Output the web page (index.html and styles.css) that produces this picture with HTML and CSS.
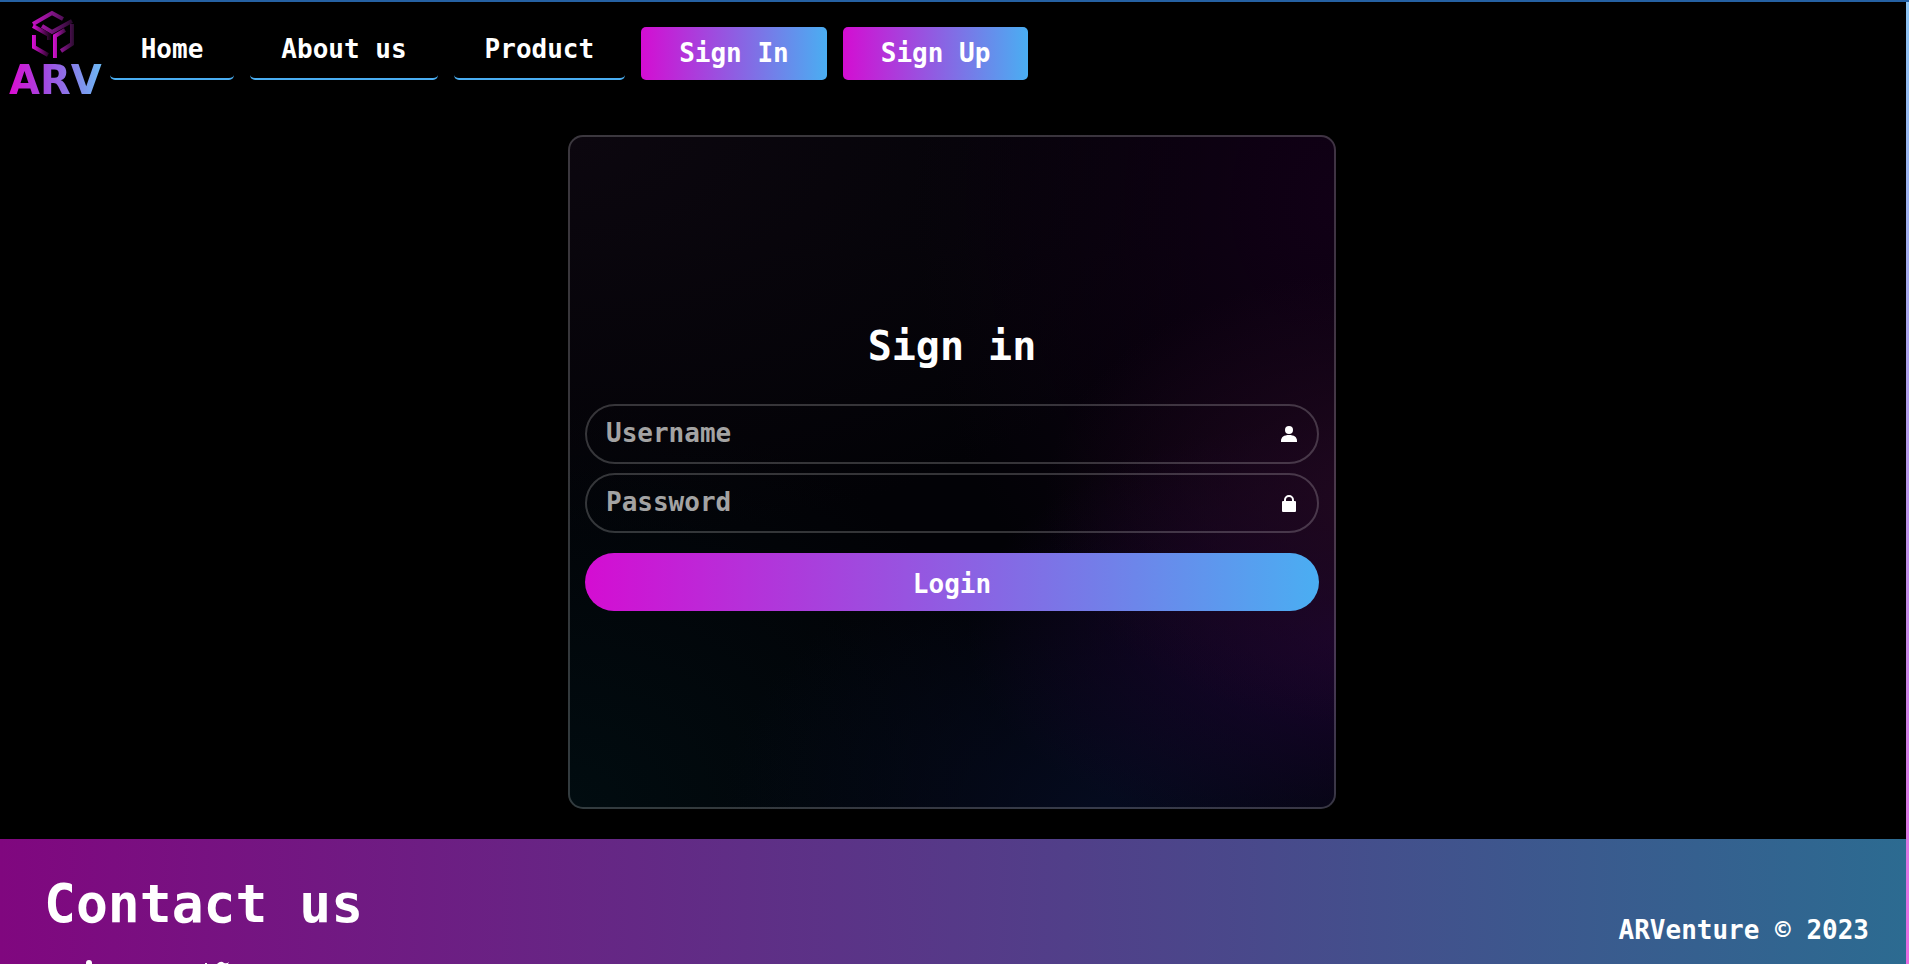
FILE: index.html
```html
<!DOCTYPE html>
<html lang="en">
<head>
<meta charset="utf-8">
<title>ARVenture - Sign in</title>
<link rel="stylesheet" href="styles.css">
</head>
<body>
<div class="page">
  <header class="navbar">
    <a class="logo" href="#">
      <svg class="logo-cube" viewBox="0 0 44 50" fill="none" stroke-width="4" aria-hidden="true">
        <defs>
          <linearGradient id="fade" gradientUnits="userSpaceOnUse" x1="0" y1="12" x2="44" y2="20">
            <stop offset="0" stop-color="#d010cc"/><stop offset=".5" stop-color="#7a1480"/><stop offset="1" stop-color="#1c0820"/>
          </linearGradient>
          <linearGradient id="side" gradientUnits="userSpaceOnUse" x1="2" y1="0" x2="20" y2="0">
            <stop offset="0" stop-color="#e010dc"/><stop offset="1" stop-color="#180418"/>
          </linearGradient>
          <linearGradient id="stem" gradientUnits="userSpaceOnUse" x1="23" y1="0" x2="36" y2="0">
            <stop offset="0" stop-color="#d812d4"/><stop offset="1" stop-color="#3a0c3e"/>
          </linearGradient>
          <linearGradient id="edge" gradientUnits="userSpaceOnUse" x1="31" y1="0" x2="44" y2="0">
            <stop offset="0" stop-color="#8a1490"/><stop offset="1" stop-color="#2a0c2e"/>
          </linearGradient>
        </defs>
        <path stroke="url(#fade)" d="M3 15 22 4 33 10M12 17 22 23 42 12"/>
        <path stroke="url(#side)" d="M3 17 19 26V31M4 26V38L18 46"/>
        <path stroke="url(#stem)" d="M25 49V27L35 21"/>
        <path stroke="url(#edge)" d="M42 15V35L31 42"/>
      </svg>
      <span class="logo-name">ARV</span>
    </a>
    <nav class="links">
      <a class="link" href="#">Home</a>
      <a class="link" href="#">About us</a>
      <a class="link" href="#">Product</a>
      <a class="link filled" href="#">Sign In</a>
      <a class="link filled" href="#">Sign Up</a>
    </nav>
  </header>

  <main class="main">
    <form class="card">
      <h1 class="card-title">Sign in</h1>
      <div class="field">
        <input class="input" type="text" placeholder="Username" aria-label="Username">
        <svg class="field-icon" viewBox="0 0 16 17" aria-hidden="true"><circle cx="8" cy="4" r="4"/><path d="M0 16v-1c0-4 3-6 8-6s8 2 8 6v1z"/></svg>
      </div>
      <div class="field">
        <input class="input" type="password" placeholder="Password" aria-label="Password">
        <svg class="field-icon" viewBox="0 0 16 17" aria-hidden="true"><path fill-rule="evenodd" d="M3 6V5a5 5 0 0 1 10 0v1h1q1 0 1 1v9q0 1-1 1H2q-1 0-1-1V7q0-1 1-1zM5 6h6V5a3 3 0 0 0-6 0z"/></svg>
      </div>
      <button class="login" type="submit">Login</button>
    </form>
  </main>

  <footer class="footer">
    <section class="contact">
      <h2 class="contact-title">Contact us</h2>
      <div class="socials">
        <svg class="social" viewBox="0 0 36 36" aria-hidden="true"><path d="M18 0a3 3 0 0 1 3 3v33h-6V3a3 3 0 0 1 3-3z"/></svg>
        <svg class="social" viewBox="0 0 36 36" aria-hidden="true"><path d="M6 3h2v6H6zM18 4q4-4 7-1 3 1 5-1l-2 4H18z"/></svg>
      </div>
    </section>
    <p class="copyright">ARVenture © 2023</p>
  </footer>
</div>
<div class="scroll-track" aria-hidden="true"><div class="scroll-thumb"></div></div>
</body>
</html>
```
FILE: styles.css
```css
* { box-sizing: border-box; }

:root {
  --grad: linear-gradient(90deg, #d40dd2, #4aaef2);
  --line: rgba(255, 255, 255, .2);
}

body {
  margin: 0;
  height: 100vh;
  overflow: hidden;
  display: grid;
  grid-template-columns: 1fr 3px;
  border-top: 2px solid #2561a3;
  background: #000;
  color: #fff;
  font: bold 26px/32px "DejaVu Sans Mono", monospace;
}

.page { min-width: 0; }

.navbar {
  display: flex;
  align-items: flex-start;
  gap: 8px;
  height: 101px;
  padding: 7px 9px 0;
}

.logo {
  display: flex;
  flex-direction: column;
  align-items: flex-start;
  color: inherit;
  text-decoration: none;
}

.logo-cube { width: 44px; height: 50px; margin-left: 21px; }

.logo-name {
  font: bold 40px/42px "DejaVu Sans", sans-serif;
  background: linear-gradient(90deg, #dc0cd2, #a04be0 40%, #6cbaf5);
  background-clip: text;
  color: transparent;
}

.links { display: flex; gap: 16px; padding-top: 18px; }

.link {
  height: 53px;
  padding: 6px 31px 0;
  border-bottom: 2px solid #4aaef2;
  border-radius: 5px;
  color: #fff;
  text-decoration: none;
  white-space: nowrap;
}

.filled {
  padding: 10px 38px 0;
  border: 0;
  background: var(--grad);
}

.main { display: flex; justify-content: center; padding: 32px 2px 30px 0; }

.card {
  width: 768px;
  height: 674px;
  padding: 0 15px 12px;
  display: flex;
  flex-direction: column;
  justify-content: center;
  border: 2px solid var(--line);
  border-radius: 15px;
  background:
    radial-gradient(ellipse 44% 34% at 106% 54%, #20081f, transparent),
    radial-gradient(ellipse 50% 32% at 102% 74%, #1a0430, transparent),
    radial-gradient(ellipse 50% 40% at 70% 100%, #050b1f, transparent),
    radial-gradient(ellipse 60% 60% at 0% 100%, #010c10, transparent),
    radial-gradient(ellipse 55% 80% at 100% 10%, #110016, transparent),
    radial-gradient(ellipse 90% 60% at 0% 0%, #0c070f, transparent),
    #020206;
  background-origin: border-box;
}

.card-title { margin: 0 0 34px; font-size: 40px; line-height: 48px; text-align: center; }

.field { position: relative; margin-bottom: 9px; }

.input {
  display: block;
  width: 100%;
  height: 60px;
  padding: 0 64px 2px 19px;
  border: 2px solid var(--line);
  border-radius: 30px;
  background: transparent;
  color: #fff;
  font: inherit;
}

.input::placeholder { color: #a3a3a3; opacity: 1; }

.field-icon {
  position: absolute;
  top: 22px;
  right: 22px;
  width: 16px;
  height: 17px;
  fill: #fff;
}

.login {
  height: 58px;
  margin-top: 11px;
  padding: 4px 0 0;
  border: 0;
  border-radius: 29px;
  background: var(--grad);
  color: #fff;
  font: inherit;
}

.footer {
  display: flex;
  justify-content: space-between;
  padding: 35px 37px 40px 44px;
  background: linear-gradient(90deg, #80077f, #2c6b91);
}

.contact-title { margin: 0; font-size: 53px; line-height: 60px; }

.socials { display: flex; gap: 92px; padding: 26px 0 0 27px; }

.social { width: 36px; height: 36px; fill: #fff; }

.copyright { margin: 40px 0 0; }

.scroll-track { background: #fff; }

.scroll-thumb { height: 93%; background: linear-gradient(#8ec6f5, #e86be0); }
```
